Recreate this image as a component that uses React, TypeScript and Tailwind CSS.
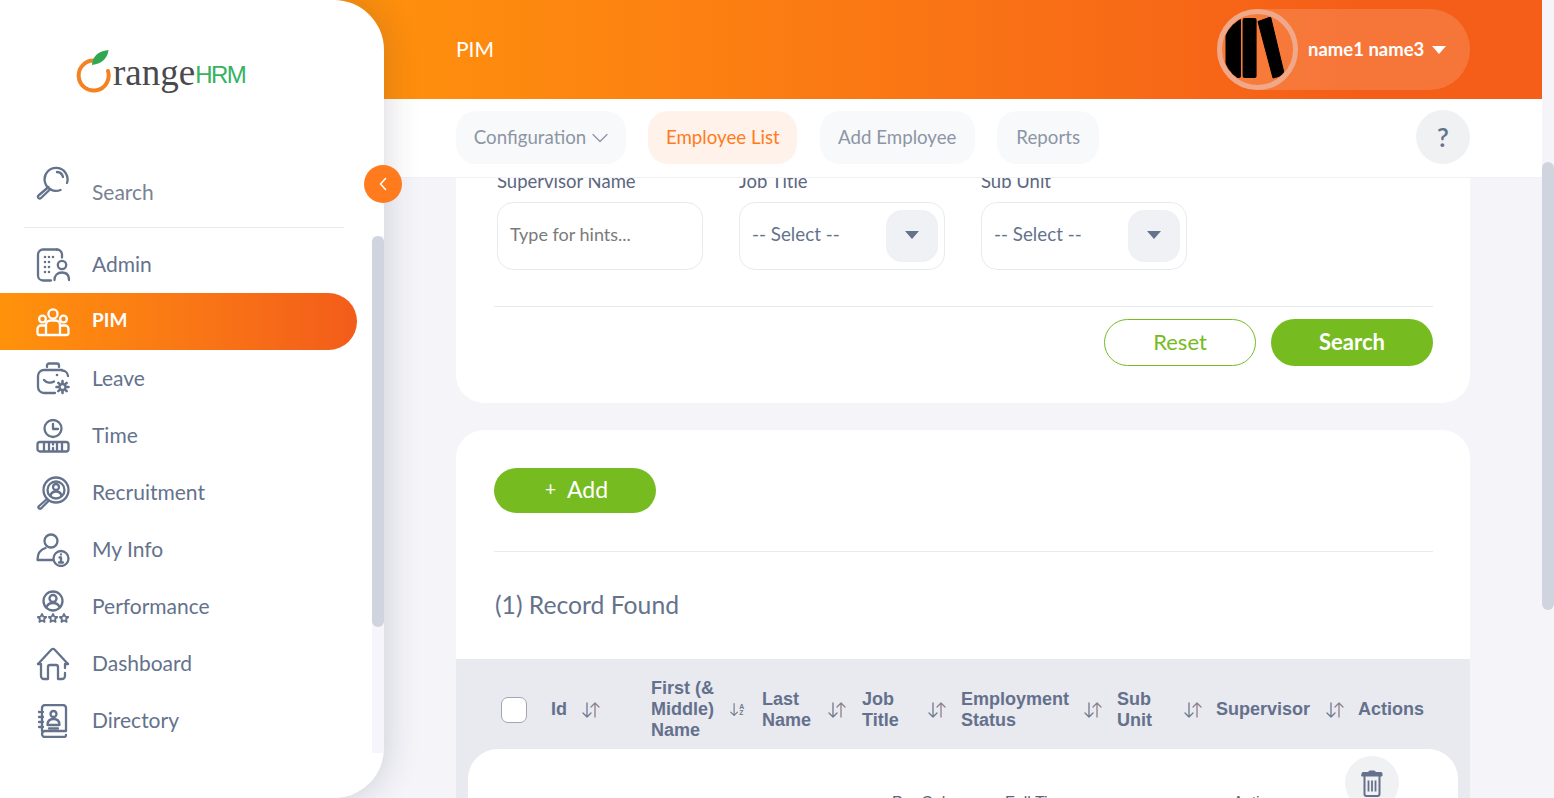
const nunito = "font-['Lato','Open_Sans',sans-serif]";

function Ic({ children, className = 'text-[#64728c]' }: { children: React.ReactNode; className?: string }) {
  return (
    <svg viewBox="0 0 34 34" fill="none" stroke="currentColor" strokeWidth="2.3" strokeLinecap="round" strokeLinejoin="round" className={`h-[34px] w-[34px] shrink-0 ${className}`}>
      {children}
    </svg>
  );
}

const navIcons: Record<string, React.ReactNode> = {
  Admin: (
    <>
      <path d="M21 1.500H7a5 5 0 0 0-5 5v21a5 5 0 0 0 5 5h8" />
      <path d="M21 1.500a5 5 0 0 1 5 5v3" />
      <path d="M9 9v0M13 9v0M17 9v0M9 14v0M13 14v0M9 19v0M13 19v0M9 24v0M13 24v0" strokeWidth="2.600" />
      <circle cx="26" cy="17" r="4.200" />
      <path d="M18.500 32c0-4.500 3-7.500 7.500-7.500s7 3 7 7.500" />
    </>
  ),
  PIM: (
    <g transform="translate(0 3)">
      <circle cx="17" cy="6" r="4.600" />
      <circle cx="6.500" cy="11" r="3.400" />
      <circle cx="27.500" cy="11" r="3.400" />
      <path d="M10 26V17a4.500 4.500 0 0 1 4.500-4.500h5A4.500 4.500 0 0 1 24 17v9" />
      <path d="M10 17.500H5a3.500 3.500 0 0 0-3.500 3.500v4a2 2 0 0 0 2 2h27a2 2 0 0 0 2-2v-4a3.500 3.500 0 0 0-3.500-3.500h-5" />
    </g>
  ),
  Leave: (
    <>
      <path d="M11 5V3.500a2 2 0 0 1 2-2h8a2 2 0 0 1 2 2V5" />
      <path d="M26 8.500a6 6 0 0 1 6 5.500M8 8h18M8 8a6 6 0 0 0-6 6v11a6 6 0 0 0 6 6h11" />
      <path d="M8 18c2.500 3 7 3.500 10 1.500" />
      <path d="M21 13v0" strokeWidth="2.600" />
      <circle cx="26.500" cy="25" r="3" />
      <path d="M26.500 19v2M26.500 29v2M20.500 25h2M30.500 25h2M22.300 20.800l1.400 1.400M29.300 27.800l1.400 1.400M22.300 29.200l1.400-1.400M29.300 22.200l1.400-1.400" strokeWidth="2.600" />
    </>
  ),
  Time: (
    <>
      <circle cx="17" cy="9.500" r="8.500" />
      <path d="M17 5v5h5" />
      <rect x="1.500" y="23" width="31" height="9.500" rx="2.500" />
      <path d="M8 23.500V32M13 24v8M21 24v8M26 23.500V32M17 24.500v1M17 29v3" />
    </>
  ),
  Recruitment: (
    <>
      <circle cx="20" cy="14" r="12.500" />
      <circle cx="20" cy="14" r="8.500" />
      <circle cx="20" cy="11" r="3" />
      <path d="M14.500 20c.5-3 2.500-4.500 5.500-4.500s5 1.500 5.500 4.500" />
      <path d="M11 23 2.500 30.500a1.700 1.700 0 0 0 2.500 2L12.500 25" />
    </>
  ),
  'My Info': (
    <>
      <circle cx="15" cy="8" r="6.500" />
      <path d="M1.500 27c0-6 2.800-10.500 8-12M1.500 27h15" />
      <circle cx="25" cy="25.500" r="7.500" />
      <path d="M25 21.500v0M23.500 24.500H25v5M23 29.500h4" />
    </>
  ),
  Performance: (
    <>
      <circle cx="17" cy="11" r="9.500" />
      <circle cx="17" cy="8.500" r="3.500" />
      <path d="M10.500 17.500c.8-3 3-4.500 6.500-4.500s5.700 1.500 6.500 4.500" />
      <path d="m6 24 1.300 2.600 2.900.4-2.100 2 .5 2.900L6 30.500l-2.600 1.400.5-2.900-2.100-2 2.900-.4zM17 24l1.300 2.600 2.900.4-2.100 2 .5 2.900-2.600-1.400-2.600 1.400.5-2.900-2.100-2 2.900-.4zM28 24l1.300 2.600 2.900.4-2.100 2 .5 2.900-2.600-1.400-2.600 1.400.5-2.900-2.100-2 2.900-.4z" strokeWidth="1.800" />
    </>
  ),
  Dashboard: (
    <>
      <path d="M2 17 15.500 2.500a2 2 0 0 1 3 0L32 17" />
      <path d="M2 17h3v12a3 3 0 0 0 3 3h4V20a2 2 0 0 1 2-2h6a2 2 0 0 1 2 2v12h4a3 3 0 0 0 3-3v-3" />
      <path d="M29 21v-4h3" />
    </>
  ),
  Directory: (
    <>
      <path d="M6 6V4a3 3 0 0 1 3-3h18a3 3 0 0 1 3 3v23H9a2.500 2.500 0 0 0 0 6h19a2 2 0 0 0 2-2" />
      <path d="M6 27V10" />
      <path d="M3 8h4M3 13h4M3 18h4M3 23h4" />
      <circle cx="17.500" cy="10" r="3" />
      <path d="M11.500 21c0-4 2-6 6-6s6 2 6 6zM13 24.500h9" />
    </>
  ),
};

const navItems = ['Admin', 'PIM', 'Leave', 'Time', 'Recruitment', 'My Info', 'Performance', 'Dashboard', 'Directory'];

function Sidebar() {
  return (
    <aside className={`relative z-10 flex h-full w-[384px] shrink-0 flex-col rounded-r-[50px] bg-white shadow-[0_0_36px_rgba(40,40,70,0.2)] ${nunito}`}>
      {/* logo */}
      <div className="flex h-[166px] shrink-0 items-start pl-[76px] pt-[50px]">
        <svg viewBox="0 0 36 44" className="h-[44px] w-[36px] shrink-0">
          <path d="M32 21A15 15 0 1 1 18 10.500" fill="none" stroke="#f58220" strokeWidth="4" strokeLinecap="round" />
          <path d="M16 15c.5-8 5-13.500 16.500-15-1 8-6 13.500-16.500 15z" fill="#2fa84f" />
        </svg>
        <span className="ml-[1px] mt-[3px] font-['Liberation_Serif',serif] text-[37px] leading-[40px] text-[#4a4a4c]">range</span>
        <span className="mt-[11px] font-['Liberation_Sans',sans-serif] text-[24px] leading-[28px] tracking-[-1.500px] text-[#35b35f]">HRM</span>
      </div>
      {/* search */}
      <div className="ml-6 flex h-[62px] w-[320px] shrink-0 items-start border-b border-[#e8eaef] pl-3">
        <Ic>
          <path d="M31 17A11.500 11.500 0 1 0 24.500 24" />
          <path d="M21 6a6.500 6.500 0 0 1 6 5" />
          <path d="M12.500 21 2.500 29.500a1.700 1.700 0 0 0 2.500 2.500L14.500 23" />
        </Ic>
        <span className="ml-[22px] mt-[13px] text-[21px] leading-[26px] text-[#7a8294]">Search</span>
      </div>
      {/* menu */}
      <nav className="mt-[8px] flex flex-col">
        {navItems.map((name) => {
          const active = name === 'PIM';
          return (
            <div
              key={name}
              className={`flex h-[57px] w-[357px] items-center gap-[22px] pl-9 ${
                active
                  ? 'rounded-r-[29px] bg-gradient-to-r from-[#ff920b] to-[#f35c1a] text-[19px] font-bold text-white'
                  : 'text-[21px] text-[#64728c]'
              }`}
            >
              <Ic className={active ? 'text-white' : 'text-[#64728c]'}>{navIcons[name]}</Ic>
              <span className="mb-[2px]">{name}</span>
            </div>
          );
        })}
      </nav>
      {/* sidebar scrollbar */}
      <div className="absolute right-0 top-[236px] h-[517px] w-3 bg-[#f5f5fb]">
        <div className="h-[391px] rounded-full bg-[#cfd4df]" />
      </div>
      {/* collapse button */}
      <div className="absolute -right-[18px] top-[165px] flex h-[38px] w-[38px] items-center justify-center rounded-full bg-[#ff7b1d] text-white">
        <svg viewBox="0 0 12 16" className="h-4 w-3" fill="none" stroke="currentColor" strokeWidth="1.500" strokeLinecap="round" strokeLinejoin="round">
          <path d="M8.500 2.500 3.500 8l5 5.500" />
        </svg>
      </div>
    </aside>
  );
}

function Header() {
  return (
    <header className={`flex h-[99px] shrink-0 items-center justify-between bg-gradient-to-r from-[#ff920b] to-[#f55e18] to-[85%] pl-[132px] pr-[72px] ${nunito}`}>
      <span className="mb-[2px] text-[21px] text-white">PIM</span>
      <div className="flex h-[81px] w-[253px] items-center rounded-full bg-white/15">
        <div className="h-[81px] w-[81px] shrink-0 rounded-full border-[5px] border-[#f0a88b]">
          <svg viewBox="1 1 71 71" className="h-[71px] w-[71px]">
            <defs>
              <clipPath id="avatar-clip">
                <circle cx="36.500" cy="36.500" r="35" />
              </clipPath>
            </defs>
            <g clipPath="url(#avatar-clip)">
              <rect x="4.500" y="5" width="15.500" height="60" rx="2" />
              <rect x="21.600" y="5" width="14" height="60" rx="2" />
              <path d="M37 8.600 49.600 4 63.500 62 52 65z" stroke="#000" strokeWidth="1" strokeLinejoin="round" />
            </g>
          </svg>
        </div>
        <span className="ml-[10px] text-[18.500px] font-bold text-white">name1 name3</span>
        <span className="ml-2 h-0 w-0 border-x-[7px] border-t-[8px] border-x-transparent border-t-white" />
      </div>
    </header>
  );
}

function Tab({ label, width, active, caret }: { label: string; width: string; active?: boolean; caret?: boolean }) {
  return (
    <div className={`flex h-[53px] items-center justify-center gap-[6px] rounded-[20px] pt-[1px] text-[18.700px] ${width} ${active ? 'bg-[#fff2ea] text-[#ff7b1d]' : 'bg-[#f8f9fa] text-[#8d95a5]'}`}>
      {label}
      {caret && (
        <svg viewBox="0 0 16 10" className="h-[10px] w-4" fill="none" stroke="currentColor" strokeWidth="1.300" strokeLinecap="round" strokeLinejoin="round">
          <path d="M1 1.500 8 8.500l7-7" />
        </svg>
      )}
    </div>
  );
}

function SubNav() {
  return (
    <div className={`flex h-[79px] shrink-0 items-center justify-between border-b border-[#f0f1f4] bg-white pb-[2px] pl-[132px] pr-[72px] ${nunito}`}>
      <div className="flex items-center gap-[22.400px]">
        <Tab label="Configuration" width="w-[170px]" caret />
        <Tab label="Employee List" width="w-[149px]" active />
        <Tab label="Add Employee" width="w-[155px]" />
        <Tab label="Reports" width="w-[102px]" />
      </div>
      <div className="flex h-[54px] w-[54px] items-center justify-center rounded-full bg-[#f0f1f3] text-[26px] font-semibold text-[#64728c]">?</div>
    </div>
  );
}

function Field({ label, value, select }: { label: string; value: string; select?: boolean }) {
  return (
    <div className="w-[206px]">
      <label className="block text-[18.500px] leading-[22px] text-[#5c6780]">{label}</label>
      <div className="mt-[10px] flex h-[68px] items-center justify-between rounded-[16px] border border-[#e8eaef] pl-3 pr-[6px]">
        <span className={`pb-[3px] ${select ? 'text-[18.800px] text-[#64728c]' : 'text-[18px] text-[#7a7a7a]'}`}>{value}</span>
        {select && (
          <span className="flex h-[52px] w-[52px] items-center justify-center rounded-[16px] bg-[#eff1f5] pb-[2px]">
            <span className="h-0 w-0 border-x-[7px] border-t-[8px] border-x-transparent border-t-[#64728c]" />
          </span>
        )}
      </div>
    </div>
  );
}

function SortIcon({ az }: { az?: boolean }) {
  return (
    <svg viewBox="0 0 20 18" className={az ? 'h-[17px] w-[17px] shrink-0' : 'h-[18px] w-5 shrink-0'} fill="none" strokeLinecap="round" strokeLinejoin="round" strokeWidth="1.300">
      <path d="M6 2v14M2 12l4 4 4-4" stroke="#6d7890" />
      {az ? (
        <text fontSize="8" fill="#6d7890" stroke="none" fontFamily="Liberation Sans">
          <tspan x="12" y="8">A</tspan>
          <tspan x="12" y="16">Z</tspan>
        </text>
      ) : (
        <path d="M14 16V2M10 6l4-4 4 4" stroke="#8f7f8a" />
      )}
    </svg>
  );
}

const columns = [
  { label: ['Id'], w: 'w-[100px]', gap: 'gap-[14px]' },
  { label: ['First (&', 'Middle)', 'Name'], w: 'w-[111px]', gap: 'gap-[15px]', az: true },
  { label: ['Last', 'Name'], w: 'w-[100px]', gap: 'gap-[16px]' },
  { label: ['Job', 'Title'], w: 'w-[99px]', gap: 'gap-[28px]' },
  { label: ['Employment', 'Status'], w: 'w-[156px]', gap: 'gap-[14px]' },
  { label: ['Sub', 'Unit'], w: 'w-[99px]', gap: 'gap-[31px]' },
  { label: ['Supervisor'], w: 'w-[142px]', gap: 'gap-[15px]' },
];

function Table() {
  return (
    <div className="bg-[#e8eaef] px-3 font-['Liberation_Sans',sans-serif]">
      <div className="flex h-[90px] items-center pl-[33px] pt-[11px] text-[18px] font-bold leading-[21px] text-[#64708c]">
        <span className="mr-6 h-[26px] w-[26px] shrink-0 rounded-[7px] border border-[#a0a6b5] bg-white" />
        {columns.map((c) => (
          <div key={c.label[0]} className={`flex shrink-0 items-center ${c.w} ${c.gap}`}>
            <span>
              {c.label.map((l) => (
                <span key={l} className="block whitespace-nowrap">{l}</span>
              ))}
            </span>
            <SortIcon az={c.az} />
          </div>
        ))}
        <span>Actions</span>
      </div>
      <div className="relative h-[120px] rounded-t-[30px] bg-white text-[16px] leading-[18px] text-[#5c6478]">
        <span className="absolute left-[424px] top-[45px]">Per Cal</span>
        <span className="absolute left-[537px] top-[45px]">Full Time</span>
        <span className="absolute left-[765px] top-[45px]">Active</span>
        <div className="absolute left-[877px] top-[7px] flex h-[54px] w-[54px] items-center justify-center rounded-full bg-[#f0f1f3]">
          <svg viewBox="0 0 24 28" className="h-[28px] w-6" fill="none" stroke="#64708c" strokeWidth="2" strokeLinecap="round" strokeLinejoin="round">
            <path d="M2 4.500a1 1 0 0 1 1-1h5.500a1.500 1.500 0 0 1 1.500-1.500h4a1.500 1.500 0 0 1 1.500 1.500H21a1 1 0 0 1 1 1V7H2z" fill="#64708c" strokeWidth="1" />
            <path d="M4.500 7v18a2 2 0 0 0 2 2h11a2 2 0 0 0 2-2V7" />
            <path d="M8.500 11.500v11M12 11.500v11M15.500 11.500v11" strokeWidth="1.800" strokeLinecap="butt" />
          </svg>
        </div>
      </div>
    </div>
  );
}

function Content() {
  return (
    <div className={`min-h-0 flex-1 overflow-hidden pl-[132px] pr-[72px] ${nunito}`}>
      <section className="-mt-[62px] rounded-[28px] bg-white pb-[37px] pl-[38px] pr-[37px] pt-[54px]">
        <div className="flex gap-9 px-[3px]">
          <Field label="Supervisor Name" value="Type for hints..." />
          <Field label="Job Title" value="-- Select --" select />
          <Field label="Sub Unit" value="-- Select --" select />
        </div>
        <div className="mt-9 border-t border-[#e8eaef] pt-3">
          <div className="flex justify-end gap-[15px]">
            <button className="h-[47px] w-[152px] rounded-full border border-[#76bc21] pb-[3px] text-[22px] text-[#76bc21]">Reset</button>
            <button className="h-[47px] w-[162px] rounded-full bg-[#76bc21] pb-[3px] text-[22px] font-bold text-white">Search</button>
          </div>
        </div>
      </section>
      <section className="mt-[27px] overflow-hidden rounded-t-[28px] bg-white">
        <div className="pl-[38px] pr-[37px] pt-[38px]">
          <button className="flex h-[45px] w-[162px] items-center justify-center gap-[11px] rounded-full bg-[#76bc21] pb-[3px] pl-[3px] text-[23px] text-white">
            <span className="text-[19px]">+</span>Add
          </button>
          <div className="mt-[38px] border-t border-[#e8eaef]" />
          <p className="mt-[37px] h-[70px] pl-[1px] text-[24.700px] leading-[32px] text-[#64728c]">(1) Record Found</p>
        </div>
        <Table />
      </section>
    </div>
  );
}

export default function App() {
  return (
    <div className="flex h-screen w-full overflow-hidden bg-[#f4f4f9]">
      <Sidebar />
      <main className="-ml-[60px] flex min-w-0 flex-1 flex-col">
        <Header />
        <SubNav />
        <Content />
      </main>
      {/* page scrollbar */}
      <div className="w-3 shrink-0 bg-[#f4f4f9] pt-[162px]">
        <div className="h-[448px] rounded-full bg-[#cfd4df]" />
      </div>
    </div>
  );
}
